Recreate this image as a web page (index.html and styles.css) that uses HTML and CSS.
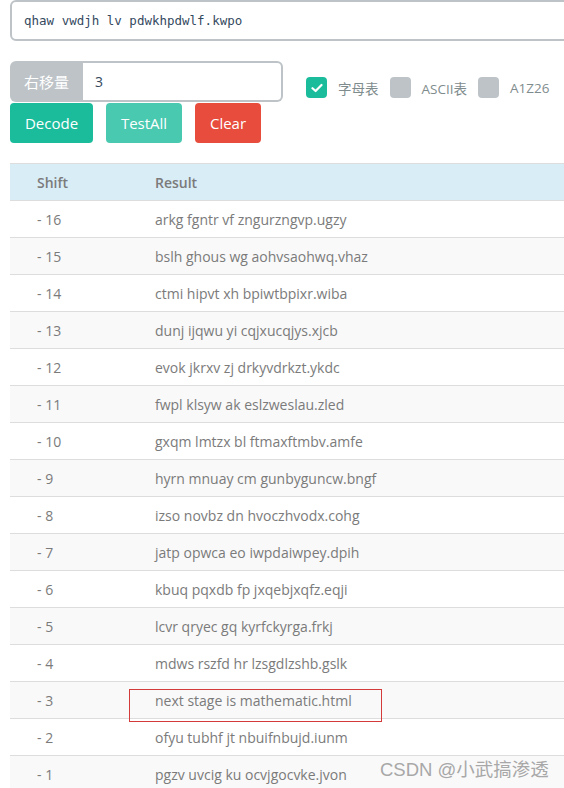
FILE: index.html
```html
<!DOCTYPE html>
<html>
<head>
<meta charset="utf-8">
<link rel="stylesheet" href="styles.css">
</head>
<body>
<div class="page">
  <div class="cipher">qhaw vwdjh lv pdwkhpdwlf.kwpo</div>
  <div class="controls">
    <div class="left">
      <div class="group">
        <span class="addon">右移量</span>
        <span class="shift-input">3</span>
      </div>
      <div class="buttons">
        <button class="btn decode">Decode</button>
        <button class="btn testall">TestAll</button>
        <button class="btn clear">Clear</button>
      </div>
    </div>
    <div class="checks">
      <span class="box on"><svg width="12" height="10" viewBox="0 0 12 10"><path d="M1.5 5.2 L4.6 8 L10.5 2" fill="none" stroke="#fff" stroke-width="2.2" stroke-linecap="round" stroke-linejoin="round"/></svg></span>
      <span class="lbl cjk">字母表</span>
      <span class="box"></span>
      <span class="lbl">ASCII表</span>
      <span class="box"></span>
      <span class="lbl">A1Z26</span>
    </div>
  </div>
  <table class="results">
    <thead><tr><th class="c1">Shift</th><th>Result</th></tr></thead>
    <tbody>
      <tr><td class="c1">- 16</td><td>arkg fgntr vf zngurzngvp.ugzy</td></tr>
      <tr><td class="c1">- 15</td><td>bslh ghous wg aohvsaohwq.vhaz</td></tr>
      <tr><td class="c1">- 14</td><td>ctmi hipvt xh bpiwtbpixr.wiba</td></tr>
      <tr><td class="c1">- 13</td><td>dunj ijqwu yi cqjxucqjys.xjcb</td></tr>
      <tr><td class="c1">- 12</td><td>evok jkrxv zj drkyvdrkzt.ykdc</td></tr>
      <tr><td class="c1">- 11</td><td>fwpl klsyw ak eslzweslau.zled</td></tr>
      <tr><td class="c1">- 10</td><td>gxqm lmtzx bl ftmaxftmbv.amfe</td></tr>
      <tr><td class="c1">- 9</td><td>hyrn mnuay cm gunbyguncw.bngf</td></tr>
      <tr><td class="c1">- 8</td><td>izso novbz dn hvoczhvodx.cohg</td></tr>
      <tr><td class="c1">- 7</td><td>jatp opwca eo iwpdaiwpey.dpih</td></tr>
      <tr><td class="c1">- 6</td><td>kbuq pqxdb fp jxqebjxqfz.eqji</td></tr>
      <tr><td class="c1">- 5</td><td>lcvr qryec gq kyrfckyrga.frkj</td></tr>
      <tr><td class="c1">- 4</td><td>mdws rszfd hr lzsgdlzshb.gslk</td></tr>
      <tr><td class="c1">- 3</td><td>next stage is mathematic.html</td></tr>
      <tr><td class="c1">- 2</td><td>ofyu tubhf jt nbuifnbujd.iunm</td></tr>
      <tr><td class="c1">- 1</td><td>pgzv uvcig ku ocvjgocvke.jvon</td></tr>
    </tbody>
  </table>
  <div class="mark"></div>
  <div class="watermark">CSDN @小武搞渗透</div>
</div>
</body>
</html>
```
FILE: styles.css
```css
html, body {
  margin: 0;
  padding: 0;
  overflow: hidden;
  background: #fff;
}
.page {
  position: relative;
  width: 620px;
  padding-left: 10px;
  font-family: "Open Sans", "Noto Sans CJK SC", sans-serif;
  color: #7b7b7b;
}
.cipher {
  box-sizing: border-box;
  height: 41px;
  border: 2px solid #bdc3c7;
  border-radius: 6px;
  padding: 0 12px;
  font-family: "DejaVu Sans Mono", monospace;
  font-size: 12.5px;
  line-height: 37px;
  color: #34495e;
}
.controls {
  display: flex;
  align-items: flex-start;
  margin-top: 20px;
}
.left {
  display: flex;
  flex-direction: column;
  gap: 1px;
}
.group {
  display: flex;
  width: 273px;
  height: 41px;
}
.addon {
  width: 73px;
  background: #bdc3c7;
  color: #fff;
  font-size: 15px;
  line-height: 41px;
  text-align: center;
  border-radius: 6px 0 0 6px;
  font-family: "Noto Sans CJK SC", sans-serif;
}
.shift-input {
  flex: 1;
  box-sizing: border-box;
  border: 2px solid #bdc3c7;
  border-left: 0;
  border-radius: 0 6px 6px 0;
  padding-left: 12px;
  font-size: 14px;
  line-height: 37px;
  color: #34495e;
}
.buttons {
  display: flex;
  gap: 13px;
}
.btn {
  height: 40px;
  border: 0;
  border-radius: 4px;
  color: #fff;
  font-family: "Open Sans", sans-serif;
  font-size: 15px;
  padding: 0;
}
.decode { width: 83px; background: #1abc9c; }
.testall { width: 76px; background: #48c9b0; }
.clear { width: 66px; background: #e74c3c; }
.checks {
  display: flex;
  align-items: center;
  margin-left: 23px;
  margin-top: 16px;
  font-size: 13.5px;
  color: #7f8c8d;
}
.box {
  width: 21px;
  height: 21px;
  border-radius: 4px;
  background: #bdc3c7;
  display: flex;
  align-items: center;
  justify-content: center;
  margin-right: 11px;
}
.box.on { background: #1abc9c; }
.lbl { margin-right: 11px; }
.cjk { font-family: "Noto Sans CJK SC", sans-serif; }
.results {
  margin-top: 20px;
  width: 610px;
  border-collapse: collapse;
  font-size: 14px;
  border-top: 1px solid #ddd;
}
.results th, .results td {
  height: 36px;
  padding: 0;
  text-align: left;
  border-bottom: 1px solid #ddd;
}
.results th {
  background: #d9edf7;
  font-weight: 600;
  color: #7b7b7b;
}
.results .c1 {
  width: 118px;
  padding-left: 27px;
}
.results tbody tr:nth-child(even) td { background: #f9f9f9; }
.mark {
  position: absolute;
  left: 129px;
  top: 689px;
  width: 251px;
  height: 31px;
  border: 1px solid #d33a3a;
}
.watermark {
  position: absolute;
  left: 380px;
  top: 755px;
  font-family: "Liberation Sans", "Noto Sans CJK SC", sans-serif;
  font-size: 18.5px;
  color: #9a9a9a;
  opacity: 0.85;
}
```
